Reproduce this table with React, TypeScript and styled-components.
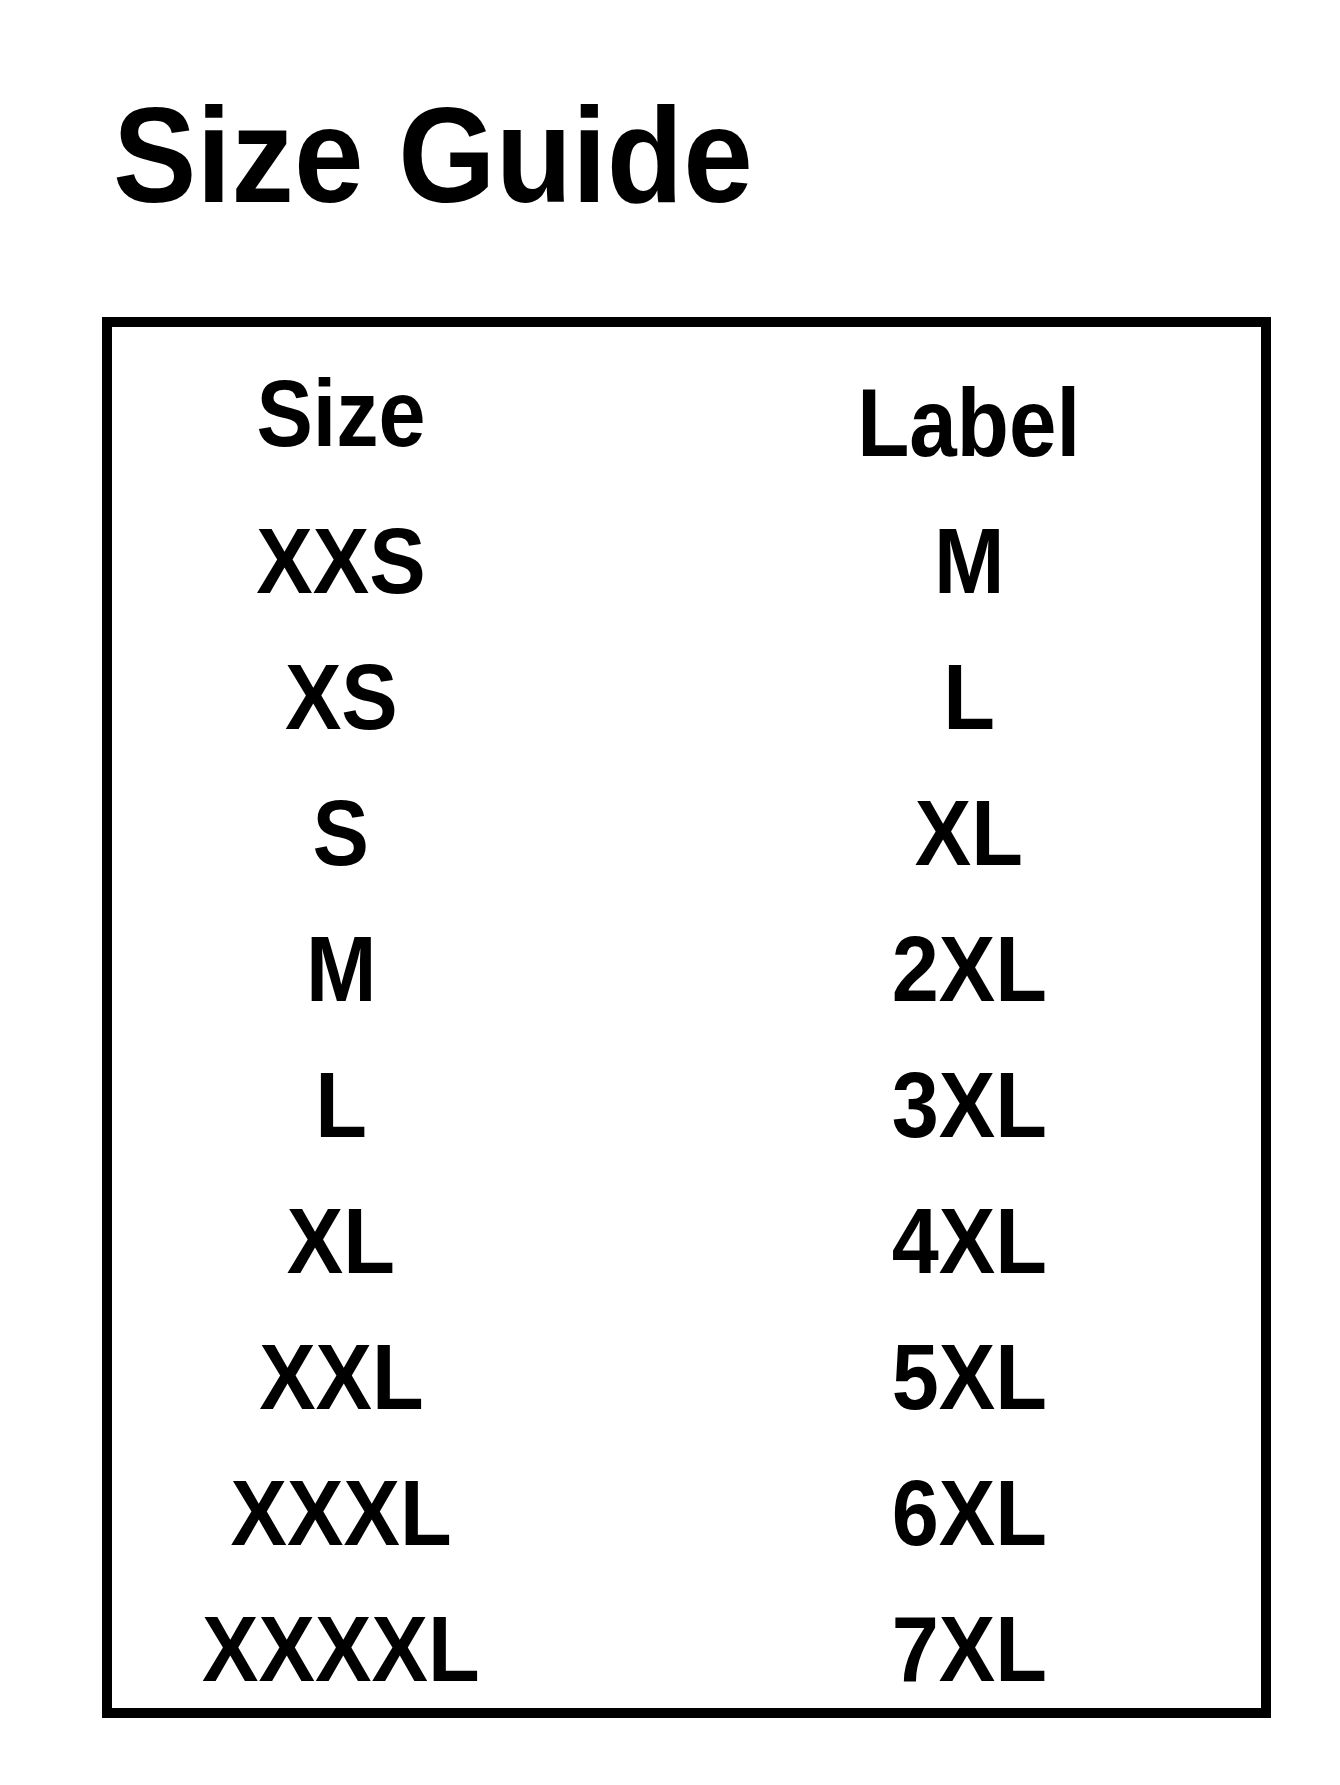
import React from "react";
import styled, { createGlobalStyle } from "styled-components";

const GlobalStyle = createGlobalStyle`
  html, body {
    margin: 0;
    padding: 0;
    background: #ffffff;
  }
  body {
    font-family: "Liberation Sans", Arial, sans-serif;
    color: #000;
  }
`;

const Page = styled.div`
  width: 1340px;
  height: 1785px;
  box-sizing: border-box;
  padding: 88px 0 0 102px;
  display: flex;
  flex-direction: column;
  align-items: flex-start;
  gap: 94px;
  background: #ffffff;
`;

const Title = styled.h1`
  margin: 0;
  padding-left: 12px;
  font-size: 135px;
  line-height: 135px;
  font-weight: 700;
  transform: scaleX(0.927);
  transform-origin: left center;
  white-space: nowrap;
`;

const Table = styled.div`
  width: 1169px;
  height: 1401px;
  box-sizing: border-box;
  border: 10px solid #000;
  padding: 6px 0 0 40px;
  display: grid;
  grid-template-columns: 378px 378px;
  column-gap: 250px;
  grid-template-rows: 160px;
  grid-auto-rows: 136px;
  align-content: start;
`;

const HeadCell = styled.div<{ $low?: boolean }>`
  text-align: center;
  font-weight: 700;
  font-size: ${({ $low }) => ($low ? "97px" : "95px")};
  line-height: ${({ $low }) => ($low ? "140px" : "160px")};
  padding-top: ${({ $low }) => ($low ? "20px" : "0")};
  white-space: nowrap;
`;

const Cell = styled.div`
  text-align: center;
  font-weight: 700;
  font-size: 92px;
  line-height: 136px;
  white-space: nowrap;
`;

const Squeeze = styled.span<{ $x?: number }>`
  display: inline-block;
  transform: scaleX(${({ $x }) => $x ?? 0.92});
  transform-origin: center;
`;

const rows: [string, string][] = [
  ["XXS", "M"],
  ["XS", "L"],
  ["S", "XL"],
  ["M", "2XL"],
  ["L", "3XL"],
  ["XL", "4XL"],
  ["XXL", "5XL"],
  ["XXXL", "6XL"],
  ["XXXXL", "7XL"],
];

export default function App() {
  return (
    <>
      <GlobalStyle />
      <Page>
        <Title>Size Guide</Title>
        <Table>
          <HeadCell>
            <Squeeze $x={0.89}>Size</Squeeze>
          </HeadCell>
          <HeadCell $low>
            <Squeeze $x={0.88}>Label</Squeeze>
          </HeadCell>
          {rows.map(([size, label]) => (
            <React.Fragment key={size}>
              <Cell>
                <Squeeze>{size}</Squeeze>
              </Cell>
              <Cell>
                <Squeeze>{label}</Squeeze>
              </Cell>
            </React.Fragment>
          ))}
        </Table>
      </Page>
    </>
  );
}
